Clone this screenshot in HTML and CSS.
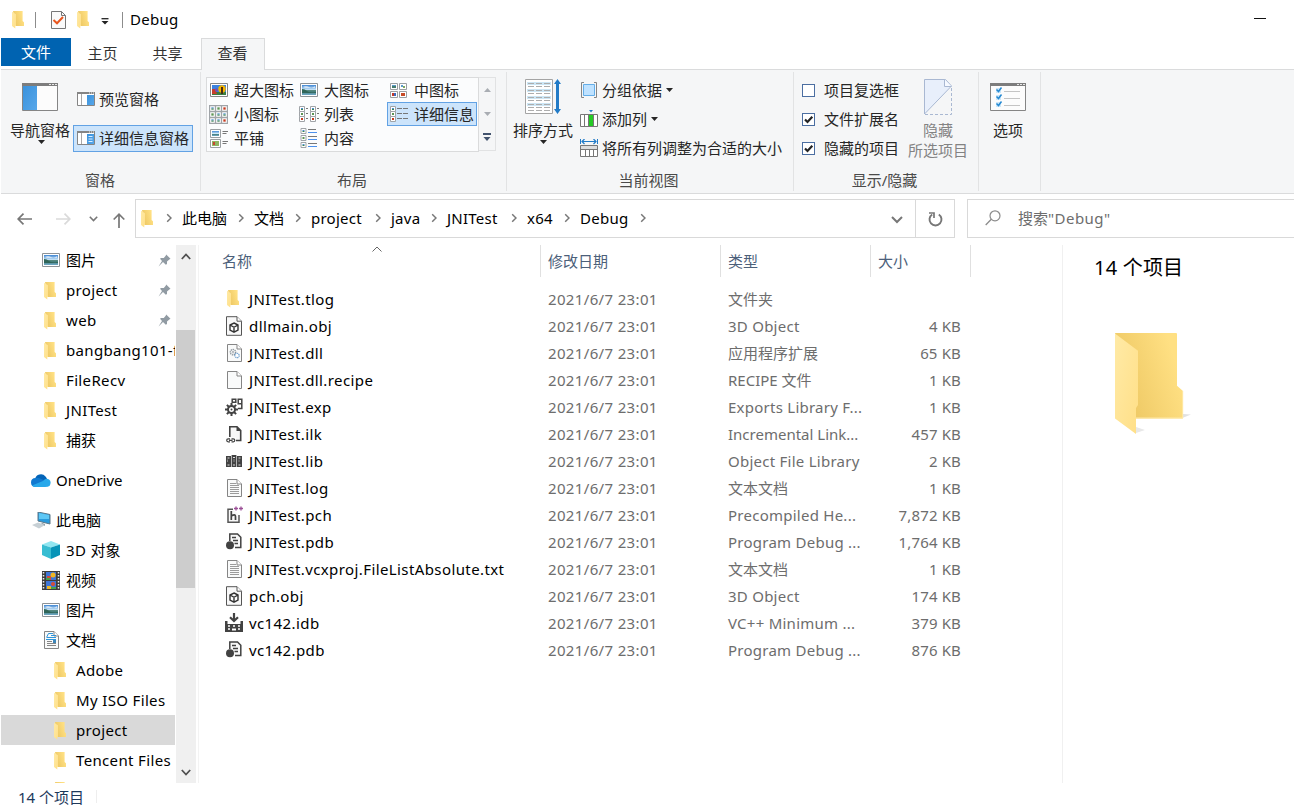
FILE: index.html
```html
<!DOCTYPE html>
<html lang="zh-CN">
<head>
<meta charset="utf-8">
<title>Debug</title>
<link rel="stylesheet" href="styles.css">
</head>
<body>
<svg class="sprite" aria-hidden="true">
  <defs>
    <linearGradient id="gFlap" x1="0" y1="0" x2="1" y2="1"><stop offset="0" stop-color="#ffeaa6"/><stop offset="1" stop-color="#ffdf87"/></linearGradient>
    <linearGradient id="gBack" x1="0" y1="1" x2="1" y2=".6"><stop offset="0" stop-color="#e9c25c"/><stop offset="1" stop-color="#ffe083"/></linearGradient>
    <linearGradient id="gSky" x1="0" y1="0" x2="0" y2="1"><stop offset="0" stop-color="#3f86d4"/><stop offset=".5" stop-color="#cfe9f8"/><stop offset=".56" stop-color="#3d7466"/><stop offset="1" stop-color="#6fa9c9"/></linearGradient>
    <linearGradient id="gBlue" x1="0" y1="0" x2="1" y2="1"><stop offset="0" stop-color="#3a92dc"/><stop offset="1" stop-color="#57a7ea"/></linearGradient>
    <symbol id="folder" viewBox="0 0 12 18"><path d="M1 0H10.6V10L12 11.3V15H4z" fill="url(#gBack)"/><path d="M0 .8L4 3.2V14.5L3.3 15.2V17.6L0 15z" fill="url(#gFlap)"/></symbol>
    <symbol id="picture" viewBox="0 0 18 14"><path d="M.5.5h17v13H.5z" fill="#fff" stroke="#8d9297"/><path d="M2 2h14v10H2z" fill="url(#gSky)"/><path d="M2 6q3 0 5 2t9 1v1H2z" fill="#2f6558"/><path d="M3 4q3-2 6 0t6-1v2H5z" fill="#fff" opacity=".6"/></symbol>
    <symbol id="mini" viewBox="0 0 6 6"><path d="M.5.5h5v5h-5z" fill="#fff" stroke="#a0a4a8"/><path d="M2 2h2v1H2z" fill="#4c8fd0"/><path d="M2 3h2v1H2z" fill="#3d8250"/></symbol>
    <symbol id="mini-red" viewBox="0 0 6 6"><path d="M.5.5h5v5h-5z" fill="#fff" stroke="#a0a4a8"/><path d="M2 2h2v2H2z" fill="#c73b20"/></symbol>
    <symbol id="mini-green" viewBox="0 0 6 6"><path d="M.5.5h5v5h-5z" fill="#fff" stroke="#a0a4a8"/><path d="M2 2h2v2H2z" fill="#5d9455"/></symbol>
    <symbol id="pin" viewBox="0 0 13 13"><path d="M8.2.5L12.5 4.8 11.3 5.4 9 7.4V10L7.8 10.8 5 8 .5 12.5 4 7 2 4.8 3 3.9H5.8L7.7 1.8z" fill="#919ba3"/></symbol>
    <symbol id="chevron" viewBox="0 0 6 10"><path d="M1.2 1.2L5 5 1.2 8.8" fill="none" stroke="#777" stroke-width="1.5"/></symbol>
    <symbol id="arrow-down" viewBox="0 0 7 4"><path d="M0 0h7L3.5 4z" fill="currentColor"/></symbol>
    <symbol id="page" viewBox="0 0 15 18"><path d="M.5.5H10L14.500 5V17.500H.5z" fill="#f9fafa" stroke="#858585"/><path d="M10 .5V5H14.500" fill="#fff" stroke="#858585"/></symbol>
    <symbol id="obj" viewBox="0 0 18 20"><path d="M1.500.7H12L16.500 5.200V19.300H1.500z" fill="#f8f8f8" stroke="#555"/><path d="M12 .7V5.200H16.500" fill="#fff" stroke="#555"/><path d="M9 7L13 9V14L9 16.200 5 14V9zM5 9L9 11.300 13 9M9 11.300V16" fill="#fff" stroke="#333" stroke-width="1.400"/></symbol>
    <symbol id="dll" viewBox="0 0 15 18"><use href="#page" width="15" height="18"/><circle cx="6" cy="8.200" r="2.700" fill="none" stroke="#89929a" stroke-width="1.300" stroke-dasharray="1.300 .7"/><circle cx="6" cy="8.200" r=".9" fill="none" stroke="#89929a" stroke-width=".7"/><circle cx="10" cy="11.500" r="2.200" fill="#fff" stroke="#6b9dcd" stroke-width="1.200" stroke-dasharray="1.200 .6"/></symbol>
    <symbol id="text" viewBox="0 0 15 18"><use href="#page" width="15" height="18"/><path d="M3 4.500H9M3 6.500H12M3 8.500H12M3 10.500H12M3 12.500H12M3 14.500H12" stroke="#9b9b9b"/></symbol>
    <symbol id="exp" viewBox="0 0 18 18"><circle cx="6.500" cy="11.500" r="3.500" fill="#fff" stroke="#424242" stroke-width="2"/><path d="M6.500 5V8M6.500 15V18M0 11.500H3M10 11.500H13M1.900 6.900L4.200 9.200M8.800 13.800L11.100 16.100M1.900 16.100L4.200 13.800M8.800 9.200L11.100 6.900" stroke="#424242" stroke-width="2"/><circle cx="6.500" cy="11.500" r="1" fill="#424242"/><path d="M7.200 1.200H10.800V4.300H7.200zM13.200 1.200H16.800V5.800H13.200zM13 10.500H16.800V5.800" fill="none" stroke="#424242" stroke-width="1.500"/></symbol>
    <symbol id="ilk" viewBox="0 0 17 18"><path d="M3.800 12V1.800H11L14.700 5.500V15.500H10" fill="#f8f8f8" stroke="#424242" stroke-width="1.600"/><path d="M10.500 1.500V6H15z" fill="#424242"/><path d="M0 12.500H10V18H0z" fill="#fff"/><path d="M4 13.800H2.200a1.500 1.500 0 0 0 0 3H4M5.500 13.800H7.300a1.500 1.500 0 0 1 0 3H5.500M3 15.300H6.500" fill="none" stroke="#424242" stroke-width="1.200"/></symbol>
    <symbol id="lib" viewBox="0 0 16 12"><path d="M0 1H5V12H0zM5.600 0H10.400V12H5.600zM11 1H16V12H11z" fill="#424242"/><path d="M1.500 3H3.500M7 2.500H9M12.500 3H14.500M1.500 10H3.500M7 10H9M12.500 10H14.500" stroke="#ddd"/><path d="M1.500 4.500V7M8 4V7M13 4.500V7" stroke="#888"/></symbol>
    <symbol id="pch" viewBox="0 0 17 18"><path d="M7 3.200H2V16.300H13V9" fill="#f8f8f8" stroke="#555" stroke-width="1.500"/><path d="M5.300 5V14M5.300 10Q9.500 7.500 9.500 10.500V14" fill="none" stroke="#424242" stroke-width="1.700"/><path d="M8 2.500H12M10 .5V4.500M13 2.500H17M15 .5V4.500" stroke="#9b4f96" stroke-width="1.300"/></symbol>
    <symbol id="pdb" viewBox="0 0 16 17"><path d="M3.800 8V1H11.500L14.800 4.300V14.500H9" fill="#f8f8f8" stroke="#424242" stroke-width="1.500"/><path d="M6 4.500H10M7 7.500H12M8.500 10.500H12" stroke="#424242" stroke-width="1.300"/><circle cx="4" cy="12.300" r="4" fill="#424242"/></symbol>
    <symbol id="idb" viewBox="0 0 18 19"><path d="M0 8H2.500V11H15.500V8H18V19H0z" fill="#424242"/><path d="M9 0V8M5 4.300L9 8 13 4.300" fill="none" stroke="#424242" stroke-width="2.200"/><path d="M3 13H5M8 13H10M13 13H15M3 16H5M13 16H15" stroke="#fff" stroke-width="1.300"/><path d="M7 15.500H11V17.500H7z" fill="#fff"/></symbol>
    <symbol id="window" viewBox="0 0 36 28"><path d="M.5.5H35.500V27.500H.5z" fill="#fcfcfc" stroke="#858585"/><path d="M0 0H36V3H0z" fill="#7d7d7d"/><path d="M27 1.500h2m1 0h2m1 0h2" stroke="#e8e8e8"/></symbol>
    <symbol id="pane" viewBox="0 0 18 14"><path d="M.5.5H17.500V13.500H.5z" fill="#fff" stroke="#858585"/><path d="M0 0H18V2H0z" fill="#858585"/><path d="M12 1h1m1 0h1m1 0h1" stroke="#eee"/><path d="M4.500 2V13" stroke="#a8a8a8"/><path d="M10 3H17V13H10z" fill="url(#gBlue)"/></symbol>
  </defs>
</svg>

<div class="window">
  <header class="titlebar">
    <svg class="ic-folder"><use href="#folder"/></svg>
    <i class="bar"></i>
    <svg class="qa-check" viewBox="0 0 15 18"><path d="M.5.5H10.500L14.500 4.500V17.500H.5z" fill="#fafafa" stroke="#777"/><path d="M10.500.5V4.500H14.500" fill="none" stroke="#777"/><path d="M2.500 9L6 12.300 12 6" fill="none" stroke="#e8561e" stroke-width="2"/></svg>
    <svg class="ic-folder"><use href="#folder"/></svg>
    <svg class="qa-more" viewBox="0 0 8 7"><path d="M.5.7H7.500" stroke="#222" stroke-width="1.300"/><path d="M.5 3H7.500L4 6.500z" fill="#222"/></svg>
    <i class="bar bar-title"></i>
    <span class="lat title">Debug</span>
    <i class="minimize"></i>
  </header>

  <nav class="tabs">
    <span class="tab tab-file">文件</span>
    <span class="tab">主页</span>
    <span class="tab">共享</span>
    <span class="tab tab-active">查看</span>
  </nav>

  <section class="ribbon">
    <div class="group g-panes">
      <div class="group-body">
        <div class="big">
          <svg class="ic-window" viewBox="0 0 36 28"><use href="#window" width="36" height="28"/><path d="M1 3H15V27H1z" fill="url(#gBlue)"/></svg>
          <span>导航窗格</span>
          <svg class="drop"><use href="#arrow-down"/></svg>
        </div>
        <div class="pane-buttons">
          <div class="pane-btn"><svg class="ic-pic"><use href="#pane"/></svg>预览窗格</div>
          <div class="pane-btn selected"><svg class="ic-pic" viewBox="0 0 18 14"><use href="#pane" width="18" height="14"/><path d="M11.500 5.500h4m-4 2.500h4m-4 2.500h4" stroke="#dceeff"/></svg>详细信息窗格</div>
        </div>
      </div>
      <div class="group-label">窗格</div>
    </div>

    <div class="group g-layout">
      <div class="group-body">
        <div class="gallery">
          <div class="view"><svg class="ic-pic" viewBox="0 0 18 14"><path d="M.5.5h17v13H.5z" fill="#fff" stroke="#858585"/><path d="M2 2h14v10H2z" fill="#3b82df"/><path d="M2 9h14v3H2z" fill="#3b7d42"/><path d="M2 6h3l2 5H2z" fill="#c83d2c"/><circle cx="6.500" cy="7" r="1.700" fill="#7252b5"/><circle cx="12" cy="6" r="3.700" fill="#f5b400"/><path d="M11 4h2v7h-2z" fill="#4a2b12"/></svg>超大图标</div>
          <div class="view"><svg class="ic-pic"><use href="#picture"/></svg>大图标</div>
          <div class="view"><svg class="ic-mid" viewBox="0 0 17 15"><path d="M.5.5h7v6h-7zM9.500.5h7v6h-7zM.5 8.500h7v6h-7zM9.500 8.500h7v6h-7z" fill="#fff" stroke="#9b9fa2"/><path d="M2 2h4v1H2z" fill="#5c9bcb"/><path d="M2 3h4v2H2z" fill="#447b6c"/><path d="M11 2h2v2h-2z" fill="#5c9bcb"/><path d="M13 3h2v2h-2z" fill="#7fa760"/><path d="M2 10h2v3H2z" fill="#c23a2a"/><path d="M4 10h2v3H4z" fill="#3b6ac0"/><path d="M11 10h4v3h-4z" fill="#c64a26"/></svg>中图标</div>
          <div class="view"><svg class="ic-grid" viewBox="0 0 19 19"><use href="#mini" width="7" height="7"/><use href="#mini-green" x="6" width="7" height="7"/><use href="#mini-red" x="12" width="7" height="7"/><use href="#mini-green" y="6" width="7" height="7"/><use href="#mini" x="6" y="6" width="7" height="7"/><use href="#mini" x="12" y="6" width="7" height="7"/><use href="#mini" y="12" width="7" height="7"/><use href="#mini" x="6" y="12" width="7" height="7"/><use href="#mini-red" x="12" y="12" width="7" height="7"/></svg>小图标</div>
          <div class="view"><svg class="ic-list" viewBox="0 0 20 16"><use href="#mini" width="6" height="6"/><use href="#mini-green" y="5" width="6" height="6"/><use href="#mini-red" y="10" width="6" height="6"/><use href="#mini" x="11" width="6" height="6"/><use href="#mini-green" x="11" y="5" width="6" height="6"/><use href="#mini-red" x="11" y="10" width="6" height="6"/><path d="M7 2.500h2m-2 5h2m-2 5h2M18 2.500h2m-2 5h2m-2 5h2" stroke="#777"/></svg>列表</div>
          <div class="view selected"><svg class="ic-detail" viewBox="0 0 18 16"><use href="#mini" width="6" height="6"/><use href="#mini-green" y="5" width="6" height="6"/><use href="#mini-red" y="10" width="6" height="6"/><path d="M7 2.500h5m1 0h5M7 7.500h5m1 0h5M7 12.500h5m1 0h5" stroke="#777"/></svg>详细信息</div>
          <div class="view"><svg class="ic-tile" viewBox="0 0 18 19"><path d="M.5.5h10v8H.5zM.5 10.500h10v8H.5z" fill="#fff" stroke="#9b9fa2"/><path d="M2 2h7v5H2z" fill="url(#gSky)"/><path d="M2 12h7v5H2z" fill="#8fb463"/><path d="M3 13h2v3H3z" fill="#c64730"/><path d="M12.500 2.500h5.500m-5.500 2h4M12.500 12.500h5.500m-5.500 2h4" stroke="#777"/></svg>平铺</div>
          <div class="view"><svg class="ic-content" viewBox="0 0 18 20"><use href="#mini" width="7" height="6"/><use href="#mini-green" y="7" width="7" height="6"/><use href="#mini" y="14" width="7" height="6"/><path d="M8 1.500h8M8 8.500h9M8 15.500h9" stroke="#777"/><path d="M8 4.500h9M8 11.500h9M8 18.500h9" stroke="#4b90ec"/></svg>内容</div>
        </div>
        <div class="gallery-scroll">
          <svg class="gs-up" viewBox="0 0 7 4"><path d="M0 4L3.500 0 7 4z" fill="#a9adb3"/></svg>
          <svg class="gs-down" viewBox="0 0 7 4"><path d="M0 0h7L3.500 4z" fill="#a9adb3"/></svg>
          <svg class="gs-more" viewBox="0 0 8 8"><path d="M0 1h8" stroke="#42536e" stroke-width="2"/><path d="M.5 4h7L4 8z" fill="#42536e"/></svg>
        </div>
      </div>
      <div class="group-label">布局</div>
    </div>

    <div class="group g-view">
      <div class="group-body">
        <div class="big">
          <svg class="ic-sort" viewBox="0 0 36 35"><path d="M.5.5h27v34H.5z" fill="#fff" stroke="#a4a4a4"/><path d="M2 3h24v3H2zm0 7h24v3H2zm0 7h24v3H2zm0 7h24v3H2z" fill="#cce6f5"/><path d="M3 4.500h6m2 0h6m2 0h6M3 7.500h6m2 0h6m2 0h6M3 11.500h6m2 0h6m2 0h6M3 14.500h6m2 0h6m2 0h6M3 18.500h6m2 0h6m2 0h6M3 21.500h6m2 0h6m2 0h6M3 25.500h6m2 0h6m2 0h6M3 28.500h6m2 0h6m2 0h6M3 31.500h6m2 0h6m2 0h6" stroke="#adadad"/><path d="M32.500 0L36 5H34V30H36L32.500 35 29 30H31V5H29z" fill="#227bc7"/></svg>
          <span>排序方式</span>
          <svg class="drop"><use href="#arrow-down"/></svg>
        </div>
        <div class="commands">
          <div class="command"><svg class="ic-cmd" viewBox="0 0 18 18"><path d="M4 1.500H1.500V16.500H4M14 1.500h2.500V16.500H14" fill="none" stroke="#858585"/><path d="M3.500 3.500h11v11h-11z" fill="#bfe2ff" stroke="#64aee8"/></svg>分组依据<svg class="drop-inline"><use href="#arrow-down"/></svg></div>
          <div class="command"><svg class="ic-cmd" viewBox="0 0 18 18"><path d="M.5 4.500h17v12H.5z" fill="#fff" stroke="#777"/><path d="M4.500 4v12M8.500 4v12M13.500 4v12" stroke="#777"/><path d="M9 5h4v11H9z" fill="#25cb25"/><path d="M9 0h4l-2 2.500z" fill="#227bc7"/></svg>添加列<svg class="drop-inline"><use href="#arrow-down"/></svg></div>
          <div class="command"><svg class="ic-cmd" viewBox="0 0 18 18"><path d="M.5 0v5M17.500 0v5" stroke="#227bc7"/><path d="M2 2.500h14M4.500 0L2 2.500 4.500 5M13.500 0L16 2.500 13.500 5" fill="none" stroke="#227bc7" stroke-width="1.200"/><path d="M.5 6.500h17v11H.5z" fill="#fff" stroke="#777"/><path d="M1 7h16v3H1z" fill="#ddd"/><path d="M0 10.500h18M5.500 11v6M9.500 11v6M13.500 11v6" stroke="#777"/></svg>将所有列调整为合适的大小</div>
        </div>
      </div>
      <div class="group-label">当前视图</div>
    </div>

    <div class="group g-show">
      <div class="group-body">
        <div class="checks">
          <div class="check"><i class="box"></i>项目复选框</div>
          <div class="check"><i class="box"><svg viewBox="0 0 11 11"><path d="M2 5.500L4.500 8 9.300 2.800" fill="none" stroke="#222" stroke-width="2.200"/></svg></i>文件扩展名</div>
          <div class="check"><i class="box"><svg viewBox="0 0 11 11"><path d="M2 5.500L4.500 8 9.300 2.800" fill="none" stroke="#222" stroke-width="2.200"/></svg></i>隐藏的项目</div>
        </div>
        <div class="big disabled">
          <svg class="ic-hide" viewBox="0 0 28 36"><path d="M.5.5H21.500L27.500 7 .5 35z" fill="#e8effb" stroke="#a9b8d2"/><path d="M20.500.5V7.500H27.500" fill="#f6f9ff" stroke="#a9b8d2"/><path d="M27.500 9V35.500H.5" fill="none" stroke="#a9b8d2" stroke-dasharray="3 2"/></svg>
          <span>隐藏</span><span>所选项目</span>
        </div>
      </div>
      <div class="group-label">显示/隐藏</div>
    </div>

    <div class="group g-options">
      <div class="group-body">
        <div class="big">
          <svg class="ic-window" viewBox="0 0 36 28"><use href="#window" width="36" height="28"/><path d="M14 8.500h16M14 15.500h16M14 22.500h16" stroke="#c4c4c4"/><path d="M6 5h5v5H6zm0 7h5v5H6zm0 7h5v5H6z" fill="#cde7f9"/><path d="M6.500 6.500L8.500 8.500 11.500 4.500M6.500 13.500L8.500 15.500 11.500 11.500M6.500 20.500L8.500 22.500 11.500 18.500" fill="none" stroke="#2589d2" stroke-width="1.500"/></svg>
          <span>选项</span>
        </div>
      </div>
    </div>
  </section>

  <section class="navbar">
    <div class="history">
      <svg class="nav-back" viewBox="0 0 15 12"><path d="M15 6H1M6.500.7L1.200 6 6.500 11.300" fill="none" stroke="#777" stroke-width="1.700"/></svg>
      <svg class="nav-fwd" viewBox="0 0 15 12"><path d="M0 6H14M8.500.7L13.800 6 8.500 11.300" fill="none" stroke="#dadada" stroke-width="1.700"/></svg>
      <svg class="nav-recent" viewBox="0 0 9 6"><path d="M.8.8L4.500 4.500 8.200.8" fill="none" stroke="#777" stroke-width="1.600"/></svg>
      <svg class="nav-up" viewBox="0 0 12 15"><path d="M6 15V1M.7 6.500L6 1.200 11.300 6.500" fill="none" stroke="#777" stroke-width="1.700"/></svg>
    </div>
    <div class="address">
      <svg class="ic-folder"><use href="#folder"/></svg>
      <div class="crumbs">
        <svg class="chev"><use href="#chevron"/></svg><span class="c45">此电脑</span>
        <svg class="chev"><use href="#chevron"/></svg><span class="c30">文档</span>
        <svg class="chev"><use href="#chevron"/></svg><span class="lat c53">project</span>
        <svg class="chev"><use href="#chevron"/></svg><span class="lat c29">java</span>
        <svg class="chev"><use href="#chevron"/></svg><span class="lat c53">JNITest</span>
        <svg class="chev"><use href="#chevron"/></svg><span class="lat c26">x64</span>
        <svg class="chev"><use href="#chevron"/></svg><span class="lat c49">Debug</span>
        <svg class="chev"><use href="#chevron"/></svg>
      </div>
      <svg class="addr-drop" viewBox="0 0 12 8"><path d="M1 1L6 6 11 1" fill="none" stroke="#777" stroke-width="2"/></svg>
      <div class="refresh"><svg viewBox="0 0 15 15"><path d="M4.200 2.500A6 6 0 1 0 10.800 2.500" fill="none" stroke="#777" stroke-width="1.900"/><path d="M1 1H6V6" fill="none" stroke="#777" stroke-width="1.700"/></svg></div>
    </div>
    <div class="search">
      <svg viewBox="0 0 16 16"><circle cx="10" cy="5.800" r="5" fill="none" stroke="#8b8b8b" stroke-width="1.200"/><path d="M6.300 9.300L.7 15" stroke="#8b8b8b" stroke-width="1.300"/></svg>
      <span>搜索<span class="lat">"Debug"</span></span>
    </div>
  </section>

  <main class="main">
    <aside class="tree">
      <div class="node l1"><i><svg class="ic-pic"><use href="#picture"/></svg></i>图片<svg class="pin"><use href="#pin"/></svg></div>
      <div class="node l1"><i><svg class="ic-folder"><use href="#folder"/></svg></i><span class="lat">project</span><svg class="pin"><use href="#pin"/></svg></div>
      <div class="node l1"><i><svg class="ic-folder"><use href="#folder"/></svg></i><span class="lat">web</span><svg class="pin"><use href="#pin"/></svg></div>
      <div class="node l1"><i><svg class="ic-folder"><use href="#folder"/></svg></i><span class="lat">bangbang101-f</span></div>
      <div class="node l1"><i><svg class="ic-folder"><use href="#folder"/></svg></i><span class="lat">FileRecv</span></div>
      <div class="node l1"><i><svg class="ic-folder"><use href="#folder"/></svg></i><span class="lat">JNITest</span></div>
      <div class="node l1"><i><svg class="ic-folder"><use href="#folder"/></svg></i>捕获</div>
      <div class="node l0 spaced"><i><svg class="ic-cloud" viewBox="0 0 20 14"><path d="M4 6A6 6 0 0 1 14.500 3.500 5 5 0 0 1 16 6L9 11z" fill="#0364b8"/><path d="M4.500 5Q0 5 0 9.500T5 14L15 8 8.500 5.200Q6.500 4.500 4.500 5z" fill="#1179d0"/><path d="M12 8Q15 4.500 18 6.500T18.500 13Q17 14 14 14H5Q2.500 14 1 12.500z" fill="#28a8ea"/></svg></i><span>OneDrive</span></div>
      <div class="node l0 spaced"><i><svg class="ic-pc" viewBox="0 0 19 17"><path d="M6 0L18 2.500V12L6 9z" fill="#299bdd" stroke="#5c7788"/><path d="M7 1L17 3V7L7 7z" fill="#5dc7f5"/><path d="M10 11L13 12V14L9 12z" fill="#8c9ba4"/><path d="M0 13L6 10.500 13 13 7 16.500z" fill="#c7d0d5"/></svg></i>此电脑</div>
      <div class="node l1"><i><svg class="ic-cube" viewBox="0 0 18 18"><path d="M9 0L18 3.500 9 6.500 0 3.500z" fill="#91e6f1"/><path d="M0 3.500L9 6.500V18L0 14z" fill="#38bdd2"/><path d="M18 3.500L9 6.500V18L18 14z" fill="#0794b8"/></svg></i><span><span class="lat">3D </span>对象</span></div>
      <div class="node l1"><i><svg class="ic-video" viewBox="0 0 18 19"><path d="M0 0H18V19H0z" fill="#3c3c3c"/><path d="M4 1H14V9H4zM4 10H14V18H4z" fill="#3f75d6"/><path d="M5 5h4v4H5z" fill="#d64b36"/><circle cx="11" cy="4" r="2.500" fill="#f0b622"/><path d="M4 7h4v2H4zM9 16h5v2H9z" fill="#47a24a"/><circle cx="11" cy="13" r="2" fill="#d94c34"/><path d="M5 15h4v3H5z" fill="#f0b622"/><path d="M1.500 1V19M16.500 1V19" stroke="#eee" stroke-width="1.500" stroke-dasharray="1.500 1.500"/></svg></i>视频</div>
      <div class="node l1"><i><svg class="ic-pic"><use href="#picture"/></svg></i>图片</div>
      <div class="node l1"><i><svg class="ic-doc" viewBox="0 0 15 18"><use href="#page" width="15" height="18"/><path d="M2.500 6.500L4.500 2.500H9M7 4.500H12M2 8.500H12M3 6.500H12" fill="none" stroke="#2e95da"/><path d="M9 9H12V12H9z" fill="#3d85b8"/><path d="M3 10.500H8M3 12.500H12M3 14.500H12" stroke="#858585"/></svg></i>文档</div>
      <div class="node l2"><i><svg class="ic-folder"><use href="#folder"/></svg></i><span class="lat">Adobe</span></div>
      <div class="node l2"><i><svg class="ic-folder"><use href="#folder"/></svg></i><span class="lat">My ISO Files</span></div>
      <div class="node l2 current"><i><svg class="ic-folder"><use href="#folder"/></svg></i><span class="lat">project</span></div>
      <div class="node l2"><i><svg class="ic-folder"><use href="#folder"/></svg></i><span class="lat">Tencent Files</span></div>
      <div class="node l2"><i><svg class="ic-folder"><use href="#folder"/></svg></i></div>
    </aside>
    <div class="scrollbar">
      <svg viewBox="0 0 10 7"><path d="M.8 6L5 1.500 9.200 6" fill="none" stroke="#505050" stroke-width="1.800"/></svg>
      <div class="track"><div class="thumb"></div></div>
      <svg viewBox="0 0 10 7"><path d="M.8 1L5 5.500 9.200 1" fill="none" stroke="#505050" stroke-width="1.800"/></svg>
    </div>
    <section class="files">
      <div class="columns">
        <span class="col-name">名称<svg class="sort-mark" viewBox="0 0 10 6"><path d="M.5 5.500L5 1 9.500 5.500" fill="none" stroke="#666"/></svg></span><span>修改日期</span><span>类型</span><span>大小</span>
      </div>
      <div class="row"><i><svg class="ic-folder"><use href="#folder"/></svg></i><b class="lat">JNITest.tlog</b><span class="date">2021/6/7 23:01</span><span>文件夹</span><span class="size"></span></div>
      <div class="row"><i><svg class="f-obj"><use href="#obj"/></svg></i><b class="lat">dllmain.obj</b><span class="date">2021/6/7 23:01</span><span class="lat">3D Object</span><span class="size">4 KB</span></div>
      <div class="row"><i><svg class="f-page"><use href="#dll"/></svg></i><b class="lat">JNITest.dll</b><span class="date">2021/6/7 23:01</span><span>应用程序扩展</span><span class="size">65 KB</span></div>
      <div class="row"><i><svg class="f-page"><use href="#page"/></svg></i><b class="lat">JNITest.dll.recipe</b><span class="date">2021/6/7 23:01</span><span>RECIPE 文件</span><span class="size">1 KB</span></div>
      <div class="row"><i><svg class="f-exp"><use href="#exp"/></svg></i><b class="lat">JNITest.exp</b><span class="date">2021/6/7 23:01</span><span class="lat">Exports Library F...</span><span class="size">1 KB</span></div>
      <div class="row"><i><svg class="f-ilk"><use href="#ilk"/></svg></i><b class="lat">JNITest.ilk</b><span class="date">2021/6/7 23:01</span><span>Incremental Link...</span><span class="size">457 KB</span></div>
      <div class="row"><i><svg class="f-lib"><use href="#lib"/></svg></i><b class="lat">JNITest.lib</b><span class="date">2021/6/7 23:01</span><span class="lat">Object File Library</span><span class="size">2 KB</span></div>
      <div class="row"><i><svg class="f-page"><use href="#text"/></svg></i><b class="lat">JNITest.log</b><span class="date">2021/6/7 23:01</span><span>文本文档</span><span class="size">1 KB</span></div>
      <div class="row"><i><svg class="f-pch"><use href="#pch"/></svg></i><b class="lat">JNITest.pch</b><span class="date">2021/6/7 23:01</span><span class="lat">Precompiled He...</span><span class="size">7,872 KB</span></div>
      <div class="row"><i><svg class="f-pdb"><use href="#pdb"/></svg></i><b class="lat">JNITest.pdb</b><span class="date">2021/6/7 23:01</span><span class="lat">Program Debug ...</span><span class="size">1,764 KB</span></div>
      <div class="row"><i><svg class="f-page"><use href="#text"/></svg></i><b class="lat">JNITest.vcxproj.FileListAbsolute.txt</b><span class="date">2021/6/7 23:01</span><span>文本文档</span><span class="size">1 KB</span></div>
      <div class="row"><i><svg class="f-obj"><use href="#obj"/></svg></i><b class="lat">pch.obj</b><span class="date">2021/6/7 23:01</span><span class="lat">3D Object</span><span class="size">174 KB</span></div>
      <div class="row"><i><svg class="f-idb"><use href="#idb"/></svg></i><b class="lat">vc142.idb</b><span class="date">2021/6/7 23:01</span><span class="lat">VC++ Minimum ...</span><span class="size">379 KB</span></div>
      <div class="row"><i><svg class="f-pdb"><use href="#pdb"/></svg></i><b class="lat">vc142.pdb</b><span class="date">2021/6/7 23:01</span><span class="lat">Program Debug ...</span><span class="size">876 KB</span></div>
    </section>
    <aside class="preview">
      <h1>14 个项目</h1>
      <svg class="big-folder" viewBox="0 0 76 102"><path d="M66 85.500L76 81.500 68 81z" fill="#e2e2e2"/><path d="M21 100L30 97 21 94z" fill="#e8e8e8"/><path d="M0 0H61Q62 0 62 1V52.700L68 58V85.500H21z" fill="url(#gBack)"/><path d="M21 85H67.700V58" fill="none" stroke="#ffe9a8"/><path d="M0 .5L23 17.700V72L21 75V101L0 85.500z" fill="url(#gFlap)"/></svg>
    </aside>
  </main>

  <footer class="status">14 个项目<i></i></footer>
</div>
</body>
</html>
```
FILE: styles.css
```css
* { box-sizing: border-box; }
body {
  margin: 0;
  width: 1294px;
  height: 812px;
  overflow: hidden;
  background: #fff;
  color: #000;
  font: 15px/20px "Noto Sans", "Noto Sans CJK SC", sans-serif;
  white-space: nowrap;
}
svg { display: block; flex: none; }
i, b { font-style: normal; font-weight: 400; }
.sprite { position: absolute; width: 0; height: 0; }
.window { display: flex; flex-direction: column; height: 812px; padding-left: 1px; }
.lat { letter-spacing: .25px; }

.ic-folder { width: 12px; height: 18px; }
.ic-pic { width: 18px; height: 14px; }

/* Title bar */
.titlebar { display: flex; align-items: center; height: 38px; padding: 2px 28px 0 11px; }
.title { margin-top: -2px; }
.bar { width: 1px; height: 16px; background: #8c8c8c; margin: 0 15px 0 11px; }
.qa-check { width: 15px; height: 18px; margin-right: 11px; }
.qa-more { width: 8px; height: 7px; margin-left: 12px; margin-top: 3px; }
.bar-title { margin: 0 7px 0 13px; }
.minimize { width: 12px; height: 1px; background: #111; margin: -3px 0 0 auto; }

/* Tabs */
.tabs { display: flex; height: 31px; color: #333; }
.tab { width: 65px; height: 31px; padding-right: 2px; line-height: 31px; text-align: center; }
.tab-file { width: 70px; height: 28px; padding: 0; line-height: 29px; background: #0063b1; color: #fff; }
.tab-active { width: 64px; height: 32px; padding: 0 1px 0 0; border: 1px solid #dadbdc; border-bottom: 0; background: #f5f6f7; line-height: 29px; z-index: 1; }

/* Ribbon */
.ribbon { display: flex; height: 125px; padding-top: 2px; background: #f5f6f7; border: solid #dadbdc; border-width: 1px 0; color: #262626; }
.group { display: flex; flex-direction: column; height: 119px; border-right: 1px solid #e2e3e4; }
.group-body { display: flex; flex: none; height: 94px; }
.group-label { flex: none; line-height: 28px; padding-right: 3px; text-align: center; color: #4a4a4a; }
.g-panes { width: 200px; }
.g-layout { width: 306px; }
.g-view { width: 287px; }
.g-show { width: 185px; }
.g-options { width: 62px; }
.big { display: flex; flex-direction: column; align-items: center; }
.ic-window { width: 36px; height: 28px; margin: 11px 0 9px; }
.drop { width: 7px; height: 4px; }
.g-panes .big { width: 78px; margin-right: -6px; }
.g-panes .drop { margin-left: 3px; }
.g-panes .group-label { padding-right: 1px; }
.pane-buttons { display: flex; flex-direction: column; gap: 13px; padding-top: 14px; }
.pane-btn { display: flex; align-items: center; gap: 4px; width: 120px; height: 26px; padding-left: 4px; border: 0 solid #62a2e4; }
.pane-btn.selected { height: 27px; border-width: 1px; padding: 0 0 1px 3px; background: #cce4fb; }

.g-layout .group-body { padding: 5px 0 0 5px; }
.gallery { display: grid; grid-template: repeat(3, 24px) / repeat(3, 90px); width: 273px; height: 75px; border: 1px solid #dadbdc; background: #fbfcfd; }
.view { display: grid; grid-template-columns: 24px auto; justify-content: start; align-items: center; padding-left: 3px; border: 0 solid #62a2e4; line-height: 22px; }
.view.selected { border-width: 1px; padding-left: 2px; background: #cce4fb; }
.ic-mid { width: 17px; height: 15px; }
.ic-grid { width: 19px; height: 19px; margin-left: -1px; }
.ic-list { width: 20px; height: 16px; margin-left: -1px; }
.ic-detail { width: 18px; height: 16px; }
.ic-tile { width: 18px; height: 19px; }
.ic-content { width: 18px; height: 20px; }
.gallery-scroll { display: flex; flex-direction: column; align-items: center; width: 17px; height: 74px; border: 1px solid #e1e2e3; border-left: 0; }
.gs-up { width: 7px; height: 4px; margin-top: 10px; }
.gs-down { width: 7px; height: 4px; margin-top: 20px; }
.gs-more { width: 8px; height: 8px; margin-top: 17px; }

.g-view .big { width: 72px; margin-right: 1px; }
.ic-sort { width: 36px; height: 35px; margin: 7px 0 6px; }
.commands, .checks { padding-top: 3px; }
.command { display: flex; align-items: center; height: 29px; gap: 4px; }
.ic-cmd { width: 18px; height: 18px; }
.drop-inline { width: 7px; height: 4px; }

.checks { padding-left: 8px; width: 106px; }
.check { display: flex; align-items: center; gap: 9px; height: 29px; }
.box { flex: none; width: 13px; height: 13px; margin-top: 1px; border: 1px solid #4b6ea1; background: #fff; }
.box svg { width: 11px; height: 11px; }
.disabled { width: 76px; color: #838383; }
.ic-hide { width: 28px; height: 36px; margin: 7px 0 5px; }
.g-options .big { width: 58px; }

/* Navigation row */
.navbar { display: flex; height: 51px; padding-top: 5px; }
.history { display: flex; align-items: center; width: 134px; height: 39px; padding-left: 16px; }
.nav-back, .nav-fwd { width: 15px; height: 12px; }
.nav-fwd { margin-left: 24px; }
.nav-recent { width: 9px; height: 6px; margin-left: 18px; }
.nav-up { width: 12px; height: 15px; margin: 3px 0 0 15px; }
.address, .search { display: flex; align-items: center; height: 39px; border: 1px solid #d9d9d9; }
.address { width: 820px; padding-left: 5px; }
.crumbs { display: flex; align-items: center; padding: 0 0 2px 13px; }
.chev { width: 6px; height: 10px; margin: 0 10px 0 11px; }
.chev:first-child { margin-left: 0; }
.c45 { width: 45px; } .c30 { width: 30px; } .c53 { width: 53px; } .c29 { width: 29px; } .c26 { width: 26px; } .c49 { width: 49px; }
.addr-drop { width: 12px; height: 8px; margin: 2px 12px 0 auto; }
.refresh { display: flex; align-items: center; justify-content: center; width: 39px; height: 37px; padding-top: 1px; border-left: 1px solid #d9d9d9; }
.refresh svg { width: 15px; height: 15px; }
.search { flex: 1; margin-left: 12px; padding: 0 0 2px 17px; border-right: 0; gap: 17px; color: #6d6d6d; }
.search .lat { letter-spacing: .45px; }
.search svg { width: 16px; height: 16px; }

/* Folder tree */
.main { display: flex; height: 538px; }
.tree { width: 174px; overflow: hidden; }
.tree .lat { letter-spacing: .35px; }
.node { display: flex; align-items: center; height: 30px; }
.node > i { display: flex; justify-content: center; flex: none; width: 20px; margin-right: 5px; }
.node > i .ic-folder { margin: 1px 3px 0 0; }
.l0 { padding-left: 30px; }
.l1 { padding-left: 40px; }
.l2 { padding-left: 50px; }
.spaced { margin-top: 10px; }
.current { background: #d9d9d9; }
.pin { width: 13px; height: 13px; margin: 0 4px 0 auto; }
.ic-cloud { width: 20px; height: 14px; }
.ic-pc { width: 19px; height: 17px; }
.ic-cube { width: 18px; height: 18px; }
.ic-video { width: 18px; height: 19px; }
.ic-doc { width: 15px; height: 18px; }
.scrollbar { display: flex; flex-direction: column; align-items: center; justify-content: space-between; width: 20px; margin-left: 1px; padding: 8px 0 7px; background: #f0f0f0; }
.scrollbar svg { width: 10px; height: 7px; margin-right: 1px; }
.track { flex: 1; width: 20px; padding-top: 70px; }
.thumb { width: 19px; height: 258px; background: #cdcdcd; }

/* File list */
.files { width: 865px; margin-left: 2px; border-left: 1px solid #f3f3f3; border-right: 1px solid #f0f0f0; padding-left: 23px; }
.columns { display: grid; grid-template-columns: 319px 180px 150px 100px; height: 32px; margin-bottom: 8px; line-height: 32px; color: #4c607a; }
.columns span { border-right: 1px solid #e0e0e0; padding-left: 7px; }
.columns .col-name { position: relative; padding-left: 0; }
.sort-mark { position: absolute; left: 150px; top: 1px; width: 10px; height: 6px; }
.row { display: grid; grid-template-columns: 27px 299px 180px 133px 100px; align-items: center; height: 27px; color: #6d6d6d; }
.row > i { display: flex; justify-content: center; width: 18px; margin-left: 3px; }
.row b { color: #000; }
.row b.lat { letter-spacing: .4px; }
.row .ic-folder { margin-right: 3px; }
.date { letter-spacing: .35px; }
.size { text-align: right; letter-spacing: .15px; }
.f-obj { width: 18px; height: 20px; }
.f-page { width: 15px; height: 18px; }
.f-exp { width: 18px; height: 18px; }
.f-ilk { width: 17px; height: 18px; }
.f-lib { width: 16px; height: 12px; }
.f-pch { width: 17px; height: 18px; }
.f-pdb { width: 16px; height: 17px; }
.f-idb { width: 18px; height: 19px; }

/* Details pane and status bar */
.preview { padding: 8px 0 0 31px; }
.preview h1 { margin: 0; font-size: 20px; line-height: 30px; font-weight: 400; letter-spacing: .2px; }
.big-folder { width: 76px; height: 102px; margin: 50px 0 0 21px; }
.status { display: flex; align-items: center; height: 29px; padding: 0 0 2px 17px; color: #1e395b; }
.status i { width: 1px; height: 13px; margin-left: 12px; background: #eee; }
```
